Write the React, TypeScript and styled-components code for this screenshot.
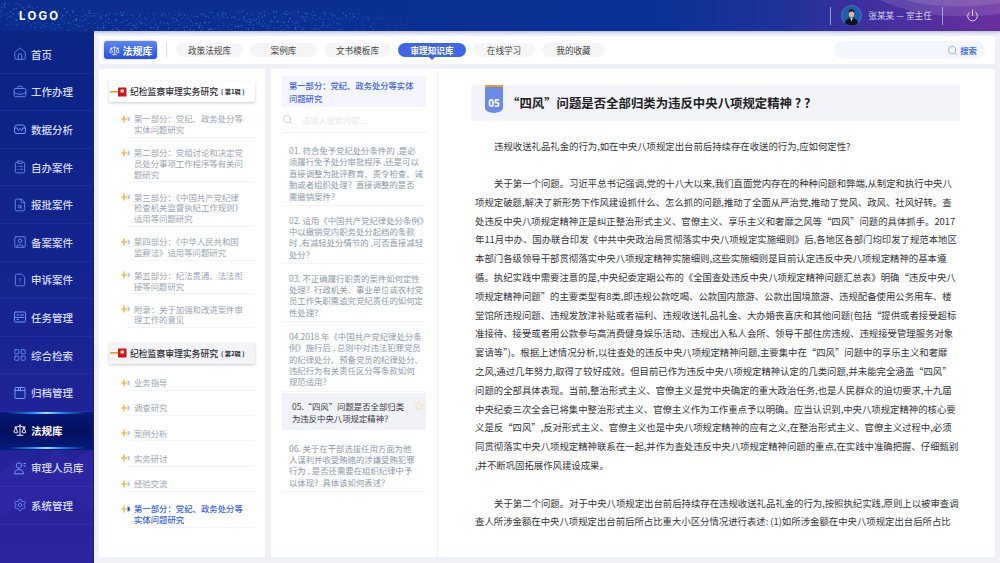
import React from 'react';
import styled, { createGlobalStyle } from 'styled-components';
import { Home, BriefcaseBusiness, ClipboardList, FileSearch, SquareUser, FileWarning, LayoutGrid, Scale, Settings, Search, Power, Star } from 'lucide-react';

const GlobalStyle = createGlobalStyle`
  html, body { margin: 0; padding: 0; }
  body {
    width: 1000px;
    height: 563px;
    overflow: hidden;
    background: #eff1f7;
    font-family: "Noto Sans CJK SC", "Noto Sans", sans-serif;
  }
`;

const Page = styled.div`
  width: 1000px;
  height: 563px;
  display: flex;
  flex-direction: column;
  overflow: hidden;
`;

const Header = styled.header`
  position: relative;
  flex: 0 0 31px;
  display: flex;
  align-items: center;
  padding: 0 21px 0 19px;
  overflow: hidden;
  background: linear-gradient(90deg, #0b2c8e 0%, #0a3296 66%, #1f3299 78%, #4a2f9f 90%, #6a2f9e 100%);
  box-shadow: 0 1px 3px rgba(30, 50, 120, 0.35);
  z-index: 2;
`;

const Dots = styled.svg`
  position: absolute;
  left: 0;
  top: 0;
`;

const Logo = styled.div`
  position: relative;
  font-family: Inter, sans-serif;
  font-size: 11.5px;
  font-weight: 700;
  letter-spacing: 2.2px;
  color: #fff;
`;

const HeaderRight = styled.div`
  position: relative;
  margin-left: auto;
  display: flex;
  align-items: center;
`;

const HeaderDivider = styled.span`
  width: 1px;
  height: 18px;
  background: rgba(255, 255, 255, 0.5);
`;

const User = styled.div`
  display: flex;
  align-items: center;
  gap: 6px;
  padding: 0 10px;
  font-size: 8.7px;
  color: #cdd2ee;
  white-space: nowrap;
`;

const PowerBtn = styled.div`
  display: flex;
  margin-left: 23px;
  color: #eef0fb;
`;

const Body = styled.div`
  flex: 1;
  display: flex;
  min-height: 0;
`;

const Sidebar = styled.nav`
  position: relative;
  flex: 0 0 94px;
  box-sizing: border-box;
  padding-top: 5px;
  overflow: hidden;
  background: linear-gradient(180deg, #0a2484 0%, #14248f 45%, #2c229f 100%);
  border-right: 1.5px solid #10218f;
`;

const Mountains = styled.svg`
  position: absolute;
  left: 0;
  bottom: 0;
`;

const NavItem = styled.div<{ $active?: boolean }>`
  position: relative;
  height: 37.6px;
  box-sizing: border-box;
  display: flex;
  align-items: center;
  padding-left: 13px;
  gap: 4px;
  font-size: 10.5px;
  font-weight: ${(p) => (p.$active ? 700 : 500)};
  color: ${(p) => (p.$active ? '#ffffff' : '#d5dcf6')};
  border-bottom: 1px solid rgba(90, 120, 220, ${(p) => (p.$active ? 0 : 0.14)});
  background: ${(p) => (p.$active ? 'linear-gradient(180deg, #071a78 0%, #050f5e 50%, #071a78 100%)' : 'none')};
  svg { color: ${(p) => (p.$active ? '#ffffff' : '#6f97f6')}; flex: none; }
  ${(p) => p.$active && `
    &::before, &::after {
      content: '';
      position: absolute;
      left: 0;
      right: 0;
      height: 2px;
      background: linear-gradient(90deg, transparent 8%, #1f8ff0 35%, #9fe0ff 50%, #1f8ff0 65%, transparent 92%);
    }
    &::before { top: 0; }
    &::after { bottom: 0; }
  `}
`;

const NavLabel = styled.span`
  position: relative;
`;

const Main = styled.main`
  flex: 1;
  min-width: 0;
  display: flex;
  flex-direction: column;
  gap: 5px;
  padding: 5px 5px 6px;
`;

const Toolbar = styled.div`
  flex: 0 0 28px;
  display: flex;
  align-items: center;
  padding: 0 10px 0 5px;
  background: #fff;
`;

const LawButton = styled.div`
  width: 53px;
  height: 18px;
  display: flex;
  align-items: center;
  justify-content: center;
  gap: 3px;
  border-radius: 3px;
  background: linear-gradient(180deg, #5c86f2 0%, #2a4fe2 100%);
  box-shadow: 0 0 2px rgba(40, 80, 220, 0.5);
  color: #fff;
  font-size: 10px;
  font-weight: 700;
`;

const ToolDivider = styled.span`
  width: 1px;
  height: 14px;
  margin: 0 9px;
  background: #dcdde2;
`;

const Pills = styled.div`
  display: flex;
  gap: 7px;
`;

const Pill = styled.div<{ $active?: boolean; $w: number }>`
  position: relative;
  width: ${(p) => p.$w}px;
  height: 14px;
  display: flex;
  align-items: center;
  justify-content: center;
  border-radius: 7px;
  font-size: 8.6px;
  font-weight: ${(p) => (p.$active ? 700 : 400)};
  color: ${(p) => (p.$active ? '#fff' : '#444')};
  background: ${(p) => (p.$active ? '#3f66e6' : '#f5f5f6')};
  ${(p) => p.$active && `
    &::after {
      content: '';
      position: absolute;
      left: 50%;
      bottom: -3px;
      margin-left: -3px;
      border-left: 3px solid transparent;
      border-right: 3px solid transparent;
      border-top: 3px solid #3f66e6;
    }
  `}
`;

const SearchBox = styled.div`
  margin-left: auto;
  width: 151px;
  height: 18px;
  box-sizing: border-box;
  display: flex;
  align-items: center;
  justify-content: flex-end;
  gap: 2px;
  padding-right: 8px;
  border-radius: 9px;
  background: #f4f6fd;
  font-size: 8.4px;
  font-weight: 700;
  color: #4a6fe8;
  svg { color: #6d90f2; }
`;

const Columns = styled.div`
  flex: 1;
  min-height: 0;
  display: flex;
`;

const TreeCol = styled.section`
  flex: 0 0 166px;
  min-width: 0;
  box-sizing: border-box;
  padding: 12px 10px 0;
  background: #fff;
  margin-right: 6px;
`;

const BookHead = styled.div<{ $shade?: boolean; $gap?: number }>`
  height: 21px;
  display: flex;
  align-items: center;
  margin-top: ${(p) => p.$gap || 0}px;
  margin-bottom: 2px;
  border-radius: 2px;
  background: ${(p) => (p.$shade ? '#f3f3f8' : '#fff')};
  box-shadow: 0 1px 3px rgba(60, 60, 90, 0.28);
  font-size: 8.8px;
  font-weight: 500;
  color: #2c2c34;
  white-space: nowrap;
  small { font-size: 6.2px; font-weight: 700; margin-left: 3px; }
`;

const BookIcon = styled.svg`
  flex: none;
  margin: 0 3px 0 1px;
`;

const TreeItem = styled.div<{ $single?: boolean; $on?: boolean }>`
  position: relative;
  margin-left: 17px;
  padding: ${(p) => (p.$single || p.$on ? '11.5px' : '9.4px')} 0 2px 8px;
  border-bottom: 1px solid #f3f4f8;
  font-size: 8.4px;
  line-height: 10.7px;
  font-weight: ${(p) => (p.$on ? 500 : 400)};
  color: ${(p) => (p.$on ? '#3d63e6' : '#9aa3af')};
`;

const TreeMark = styled.svg`
  position: absolute;
  left: -5px;
  margin-top: 1.5px;
`;

const Line = styled.div`
  white-space: nowrap;
`;

const ListCol = styled.section`
  flex: 0 0 166px;
  min-width: 0;
  box-sizing: border-box;
  padding: 7px 11px 0;
  background: #fff;
  margin-right: 1px;
`;

const PartTitle = styled.div`
  box-sizing: border-box;
  height: 31px;
  padding: 3px 7px;
  background: #f5f6fd;
  font-size: 8.3px;
  line-height: 12.5px;
  font-weight: 500;
  color: #3d63e6;
`;

const ListSearch = styled.div`
  height: 26px;
  box-sizing: border-box;
  display: flex;
  align-items: center;
  gap: 9px;
  margin-bottom: 3.5px;
  border-bottom: 1.5px solid #eef0f8;
  font-size: 8.2px;
  color: #e6e8ee;
  svg { color: #a9bdf4; flex: none; }
`;

const Question = styled.div<{ $selected?: boolean }>`
  position: relative;
  padding: ${(p) => (p.$selected ? '8px 0 6px 10px' : '8.5px 0 3px 7px')};
  margin: ${(p) => (p.$selected ? '1.5px 0 4px' : '0')};
  border-bottom: ${(p) => (p.$selected ? '0' : '1px solid #f3f4f8')};
  background: ${(p) => (p.$selected ? '#f1f2f8' : 'none')};
  font-size: 8.4px;
  line-height: 11.4px;
  color: ${(p) => (p.$selected ? '#3a3a42' : '#8d99aa')};
`;

const StarMark = styled.span`
  position: absolute;
  right: 2px;
  top: 8px;
  display: flex;
  color: #f7cf7c;
`;

const ArticleCol = styled.article`
  flex: 1;
  min-width: 0;
  box-sizing: border-box;
  padding: 16px 35px 0 33px;
  background: #fff;
`;

const TitleBar = styled.div`
  height: 35.5px;
  display: flex;
  align-items: center;
  border-radius: 2px;
  background: #f3f4f9;
`;

const Badge = styled.div`
  align-self: flex-start;
  flex: none;
  width: 18px;
  height: 28px;
  box-sizing: border-box;
  margin: 0 4px 0 14px;
  padding-top: 9px;
  text-align: center;
  border-top: 2px solid #f39a1e;
  border-radius: 0 0 9px 9px / 0 0 5px 5px;
  background: #6a8ae8;
  color: #fff;
  font-family: "Open Sans", sans-serif;
  font-size: 10px;
  line-height: 14px;
  font-weight: 700;
`;

const TitleText = styled.h1`
  margin: 0;
  font-size: 12.4px;
  font-weight: 700;
  color: #222;
  white-space: nowrap;
`;

const ArticleBody = styled.div`
  margin-top: 16px;
  margin-left: 4px;
  font-size: 9.4px;
  line-height: 18.8px;
  color: #33343a;
`;

const Para = styled.div`
  margin-bottom: 18.8px;
`;

const FirstLine = styled(Line)`
  text-indent: 19px;
`;

const NavSvg: React.FC<{ children: React.ReactNode }> = ({ children }) => (
  <svg width="14" height="14" viewBox="0 0 14 14" fill="none" stroke="currentColor" strokeWidth="1" strokeLinejoin="round" strokeLinecap="round">
    {children}
  </svg>
);

const DataIcon = () => (
  <NavSvg>
    <path d="M3.500 3h7l2 2.500V10a1.500 1.500 0 0 1-1.500 1.500H3A1.500 1.500 0 0 1 1.500 10V5.500z" />
    <path d="M1.500 6h2.800l1.200 2.500 2-2 1.300 2 1.200-2.500h2.500" />
  </NavSvg>
);

const TaskIcon = () => (
  <NavSvg>
    <rect x="1.500" y="2" width="11" height="10" rx="1.200" />
    <path d="M4 5h1.500M7 5h3.500M1.500 7.500h9M4 9.500h1.500" />
  </NavSvg>
);

const ArchiveIcon = () => (
  <NavSvg>
    <rect x="2" y="1.500" width="10" height="11" rx="0.600" />
    <path d="M2 4.500h10M5.500 1.500v3.500l1-.8 1 .8V1.500" />
  </NavSvg>
);

const PeopleIcon = () => (
  <NavSvg>
    <circle cx="6" cy="4.500" r="2.700" />
    <path d="M1.500 12.500c0-2.800 2-4 4.500-4s4.500 1.200 4.500 4zM10.800 2.500h1.800M10.800 5h1.800" />
  </NavSvg>
);

const navItems = [
  { label: '首页', icon: <Home size={14} strokeWidth={1.4} /> },
  { label: '工作办理', icon: <BriefcaseBusiness size={14} strokeWidth={1.4} /> },
  { label: '数据分析', icon: <DataIcon /> },
  { label: '自办案件', icon: <ClipboardList size={14} strokeWidth={1.4} /> },
  { label: '报批案件', icon: <FileSearch size={14} strokeWidth={1.4} /> },
  { label: '备案案件', icon: <SquareUser size={14} strokeWidth={1.4} /> },
  { label: '申诉案件', icon: <FileWarning size={14} strokeWidth={1.4} /> },
  { label: '任务管理', icon: <TaskIcon /> },
  { label: '综合检索', icon: <LayoutGrid size={14} strokeWidth={1.4} /> },
  { label: '归档管理', icon: <ArchiveIcon /> },
  { label: '法规库', icon: <Scale size={14} strokeWidth={1.6} />, active: true },
  { label: '审理人员库', icon: <PeopleIcon /> },
  { label: '系统管理', icon: <Settings size={14} strokeWidth={1.4} /> },
];

const pills = [
  { label: '政策法规库', w: 67 },
  { label: '案例库', w: 67 },
  { label: '文书模板库', w: 67 },
  { label: '审理知识库', w: 68, active: true },
  { label: '在线学习', w: 62 },
  { label: '我的收藏', w: 63 },
];

const book1 = [
  ['第一部分\uFF1A党纪、政务处分等', '实体问题研究'],
  ['第二部分\uFF1A党组讨论和决定党', '员处分事项工作程序等有关问', '题研究'],
  ['第三部分\uFF1A《中国共产党纪律', '检查机关监督执纪工作规则》', '适用等问题研究'],
  ['第四部分\uFF1A《中华人民共和国', '监察法》适用等问题研究'],
  ['第五部分\uFF1A纪法贯通、法法衔', '接等问题研究'],
  ['附录\uFF1A关于加强和改进案件审', '理工作的意见'],
];

const book2 = ['业务指导', '调查研究', '案例分析', '实务研讨', '经验交流'];

const questions = [
  { lines: ['01. 符合免予党纪处分条件的 ,是必', '须履行免予处分审批程序 ,还是可以', '直接调整为批评教育、责令检查、诫', '勉或者组织处理\uFF1F直接调整的是否', '需撤销案件\uFF1F'] },
  { lines: ['02. 适用《中国共产党纪律处分条例》', '中以撤销党内职务处分起档的条款', '时 ,有减轻处分情节的 ,可否直接减轻', '处分\uFF1F'] },
  { lines: ['03. 不正确履行职责的案件如何定性', '处理\uFF1F行政机关、事业单位或农村党', '员工作失职需追究党纪责任的如何定', '性处理\uFF1F'] },
  { lines: ['04.2018 年《中国共产党纪律处分条', '例》施行后 , 总则中对违法犯罪党员', '的纪律处分、预备党员的纪律处分、', '违纪行为有关责任区分等条款如何', '规范适用\uFF1F'] },
  { lines: ['05.“四风”问题是否全部归类', '为违反中央八项规定精神\uFF1F'], selected: true },
  { lines: ['06. 关于在干部选拔任用方面为他', '人谋利并收受贿赂的涉嫌受贿犯罪', '行为 , 是否还需要在组织纪律中予', '以体现\uFF1F具体该如何表述\uFF1F'] },
];

const para2 = [
  '项规定破题,解决了新形势下作风建设抓什么、怎么抓的问题,推动了全面从严治党,推动了党风、政风、社风好转。查',
  '处违反中央八项规定精神正是纠正整治形式主义、官僚主义、享乐主义和奢靡之风等“四风”问题的具体抓手。2017',
  '年11月中办、国办联合印发《中共中央政治局贯彻落实中央八项规定实施细则》后,各地区各部门均印发了规范本地区',
  '本部门各级领导干部贯彻落实中央八项规定精神实施细则,这些实施细则是目前认定违反中央八项规定精神的基本遵',
  '循。执纪实践中需要注意的是,中央纪委定期公布的《全国查处违反中央八项规定精神问题汇总表》明确“违反中央八',
  '项规定精神问题”的主要类型有8类,即违规公款吃喝、公款国内旅游、公款出国境旅游、违规配备使用公务用车、楼',
  '堂馆所违规问题、违规发放津补贴或者福利、违规收送礼品礼金、大办婚丧喜庆和其他问题(包括“提供或者接受超标',
  '准接待、接受或者用公款参与高消费健身娱乐活动、违规出入私人会所、领导干部住房违规、违规接受管理服务对象',
  '宴请等”)。根据上述情况分析,以往查处的违反中央八项规定精神问题,主要集中在“四风”问题中的享乐主义和奢靡',
  '之风,通过几年努力,取得了较好成效。但目前已作为违反中央八项规定精神认定的几类问题,并未能完全涵盖“四风”',
  '问题的全部具体表现。当前,整治形式主义、官僚主义是党中央确定的重大政治任务,也是人民群众的迫切要求,十九届',
  '中央纪委三次全会已将集中整治形式主义、官僚主义作为工作重点予以明确。应当认识到,中央八项规定精神的核心要',
  '义是反“四风”,反对形式主义、官僚主义也是中央八项规定精神的应有之义,在整治形式主义、官僚主义过程中,必须',
  '同贯彻落实中央八项规定精神联系在一起,并作为查处违反中央八项规定精神问题的重点,在实践中准确把握、仔细甄别',
  ',并不断巩固拓展作风建设成果。',
];

// header particle band, fixed pseudo random so the picture stays the same
const makeDots = () => {
  const out: { x: number; y: number; o: number }[] = [];
  let seed = 7;
  const rnd = () => {
    seed = (seed * 9301 + 49297) % 233280;
    return seed / 233280;
  };
  for (let x = 0; x < 430; x += 3) {
    const mid = 8 + x * 0.045 + Math.sin(x / 70) * 5;
    for (let i = 0; i < 5; i++) {
      const y = mid + (rnd() - 0.3) * 22;
      const fade = x > 300 ? (430 - x) / 130 : 1;
      out.push({ x: x + rnd() * 2, y, o: (0.2 + rnd() * 0.55) * fade });
    }
  }
  return out;
};
const dots = makeDots();

const Mark: React.FC<{ on?: boolean }> = ({ on }) => (
  <TreeMark width="10" height="8" viewBox="0 0 10 8">
    <path d="M5 1.500a2.500 2.500 0 0 1 0 5z" transform="translate(1.500 0)" fill={on ? '#2f5be6' : '#b9caf5'} />
    <path d="M3 0.500v7M0 4h6" stroke="#f5a623" strokeWidth="1.200" fill="none" />
  </TreeMark>
);

const BookMark = () => (
  <BookIcon width="17" height="10" viewBox="0 0 17 10">
    <rect x="0" y="4" width="8" height="1.600" fill="#f59a1c" />
    <rect x="8" y="0.500" width="8.500" height="9" rx="0.600" fill="#c8171f" />
    <rect x="10.500" y="2.500" width="3.500" height="3" fill="#f5d8c0" />
  </BookIcon>
);

const Avatar = () => (
  <svg width="21" height="21" viewBox="0 0 21 21">
    <circle cx="10.500" cy="10.500" r="10" fill="#1c5fa8" stroke="#5b6fc4" strokeWidth="1" />
    <path d="M3.800 18c.6-3.600 3.400-5 6.700-5s6.100 1.400 6.700 5a9.500 9.500 0 0 1-13.400 0z" fill="#0c1424" />
    <path d="M9.300 13h2.400l-1.200 3.600z" fill="#e8edf4" />
    <ellipse cx="10.500" cy="9" rx="2.700" ry="3.500" fill="#e2b597" />
    <path d="M7.700 8.400c-.3-3 1.200-4.200 2.900-4.200s3.100 1.100 2.700 4.200c-.5-1.500-1.300-2-2.700-2s-2.400.5-2.900 2z" fill="#11131c" />
  </svg>
);

export default function App() {
  return (
    <Page>
      <GlobalStyle />
      <Header>
        <Dots width="1000" height="31" viewBox="0 0 1000 31">
          {dots.map((d, i) => (
            <rect key={i} x={d.x} y={d.y} width="1" height="1" fill="#4fb4ee" opacity={d.o} />
          ))}
          <path d="M880 0c30 14 70 20 120 14V0z" fill="#ffffff" opacity="0.12" />
          <path d="M905 0c25 7 60 9 95 3V0z" fill="#ffffff" opacity="0.12" />
        </Dots>
        <Logo>LOGO</Logo>
        <HeaderRight>
          <HeaderDivider />
          <User>
            <Avatar />
            <span>张某某 — 室主任</span>
          </User>
          <HeaderDivider />
          <PowerBtn><Power size={13} strokeWidth={1.6} /></PowerBtn>
        </HeaderRight>
      </Header>
      <Body>
        <Sidebar>
          <Mountains width="94" height="130" viewBox="0 0 94 130">
            <path d="M0 40l18-14 16 10 22-22 16 14 22-12v114H0z" fill="#3a2fae" opacity="0.35" />
            <path d="M0 85l24-16 20 12 24-18 26 14v53H0z" fill="#1f1a8c" opacity="0.25" />
          </Mountains>
          {navItems.map((n) => (
            <NavItem key={n.label} $active={n.active}>
              {n.icon}
              <NavLabel>{n.label}</NavLabel>
            </NavItem>
          ))}
        </Sidebar>
        <Main>
          <Toolbar>
            <LawButton><Scale size={11} strokeWidth={1.6} />法规库</LawButton>
            <ToolDivider />
            <Pills>
              {pills.map((p) => (
                <Pill key={p.label} $w={p.w} $active={p.active}>{p.label}</Pill>
              ))}
            </Pills>
            <SearchBox><Search size={11} strokeWidth={1.4} />搜索</SearchBox>
          </Toolbar>
          <Columns>
            <TreeCol>
              <BookHead>
                <BookMark />
                纪检监察审理实务研究<small>( 第1辑 )</small>
              </BookHead>
              {book1.map((lines) => (
                <TreeItem key={lines[0]}>
                  <Mark />
                  {lines.map((l) => <Line key={l}>{l}</Line>)}
                </TreeItem>
              ))}
              <BookHead $shade $gap={14.5}>
                <BookMark />
                纪检监察审理实务研究<small>( 第2辑 )</small>
              </BookHead>
              {book2.map((l) => (
                <TreeItem key={l} $single>
                  <Mark />
                  <Line>{l}</Line>
                </TreeItem>
              ))}
              <TreeItem $on>
                <Mark on />
                <Line>{'第一部分\uFF1A党纪、政务处分等'}</Line>
                <Line>实体问题研究</Line>
              </TreeItem>
            </TreeCol>
            <ListCol>
              <PartTitle>
                <Line>{'第一部分\uFF1A党纪、政务处分等实体'}</Line>
                <Line>问题研究</Line>
              </PartTitle>
              <ListSearch>
                <Search size={11} strokeWidth={1.3} />
                请输入搜索内容...
              </ListSearch>
              {questions.map((q) => (
                <Question key={q.lines[0]} $selected={q.selected}>
                  {q.lines.map((l) => <Line key={l}>{l}</Line>)}
                  {q.selected && <StarMark><Star size={10} strokeWidth={1.2} /></StarMark>}
                </Question>
              ))}
            </ListCol>
            <ArticleCol>
              <TitleBar>
                <Badge>05</Badge>
                <TitleText>“四风”问题是否全部归类为违反中央八项规定精神 ? ?</TitleText>
              </TitleBar>
              <ArticleBody>
                <Para>
                  <FirstLine>违规收送礼品礼金的行为,如在中央八项规定出台前后持续存在收送的行为,应如何定性?</FirstLine>
                </Para>
                <Para>
                  <FirstLine>关于第一个问题。习近平总书记强调,党的十八大以来,我们直面党内存在的种种问题和弊端,从制定和执行中央八</FirstLine>
                  {para2.map((l) => <Line key={l}>{l}</Line>)}
                </Para>
                <Para>
                  <FirstLine>关于第二个问题。对于中央八项规定出台前后持续存在违规收送礼品礼金的行为,按照执纪实践,原则上以被审查调</FirstLine>
                  <Line>查人所涉金额在中央八项规定出台前后所占比重大小区分情况进行表述: (1)如所涉金额在中央八项规定出台后所占比</Line>
                </Para>
              </ArticleBody>
            </ArticleCol>
          </Columns>
        </Main>
      </Body>
    </Page>
  );
}
